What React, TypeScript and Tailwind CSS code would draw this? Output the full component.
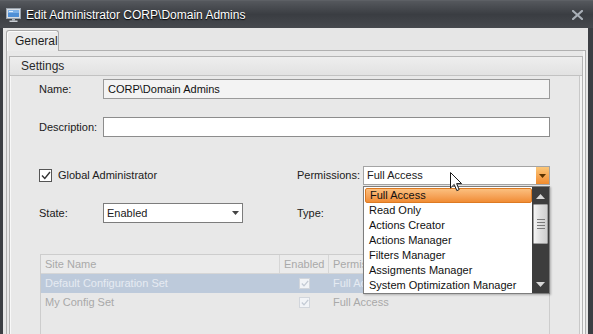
import React from 'react';

const permissionItems = [
  'Full Access',
  'Read Only',
  'Actions Creator',
  'Actions Manager',
  'Filters Manager',
  'Assigments Manager',
  'System Optimization Manager',
];

const MonitorIcon = () => (
  <svg width="15" height="14" viewBox="0 0 15 14">
    <rect x="0.5" y="0.5" width="14" height="10" fill="#d8dde3" stroke="#9aa3ad" />
    <rect x="2" y="2" width="11" height="7" fill="#4f8fd6" />
    <rect x="2" y="2" width="11" height="3" fill="#7fb2e8" />
    <rect x="3" y="3" width="4" height="1" fill="#dfefff" />
    <rect x="6" y="11" width="3" height="1.5" fill="#aab2bb" />
    <rect x="3.5" y="12.5" width="8" height="1.5" fill="#c8cdd3" />
  </svg>
);

const CloseX = () => (
  <svg width="11" height="10" viewBox="0 0 11 10">
    <path d="M1 1 L10 9 M10 1 L1 9" stroke="#a9afb7" strokeWidth="2.2" strokeLinecap="square" />
  </svg>
);

const Arrow = ({ color = '#333' }: { color?: string }) => (
  <svg width="7" height="4" viewBox="0 0 7 4">
    <path d="M0 0 H7 L3.5 4 Z" fill={color} />
  </svg>
);

const Cursor = () => (
  <svg width="13" height="20" viewBox="0 0 13 20">
    <path d="M0.5 0.5 L0.5 16 L4.2 12.4 L6.8 18.6 L9.2 17.6 L6.6 11.6 L11.6 11.6 Z" fill="#ffffff" stroke="#1a1a1a" strokeWidth="1" strokeLinejoin="round" />
  </svg>
);

const Check = ({ color }: { color: string }) => (
  <svg width="10" height="9" viewBox="0 0 10 9">
    <path d="M1 4.5 L3.8 7.5 L9 1" fill="none" stroke={color} strokeWidth="1.4" />
  </svg>
);

const GridCheck = () => (
  <div className="w-[11px] h-[11px] border border-[#d2d6dc] bg-[#f2f4f7] flex items-center justify-center">
    <svg width="8" height="7" viewBox="0 0 8 7">
      <path d="M0.8 3.5 L3 5.8 L7.2 0.8" fill="none" stroke="#c3cad4" strokeWidth="1.3" />
    </svg>
  </div>
);

export default function App() {
  return (
    <div className="relative w-[593px] h-[334px] overflow-hidden flex flex-col bg-[#3b3e43] font-['Liberation_Sans',Arial,sans-serif] text-[11px] text-[#202020]">
      {/* Title bar */}
      <div className="h-[28px] shrink-0 flex items-center bg-gradient-to-b from-[#55585d] via-[#3a3d42] to-[#46494e] border-t border-[#5d6065]">
        <div className="ml-[6px] mt-[1px]"><MonitorIcon /></div>
        <span className="ml-[5px] text-[12px] text-white [text-shadow:0_1px_1px_#000]">Edit Administrator CORP\Domain Admins</span>
        <div className="ml-auto mr-[10px] mt-[1px]"><CloseX /></div>
      </div>

      {/* Body */}
      <div className="flex-1 min-h-0 ml-[3px] mr-[5px] bg-[#e6e6e6] flex flex-col">
        {/* Tab strip */}
        <div className="pt-[2px] pl-[3px] flex">
          <div className="w-[53px] h-[21px] -mb-[1px] relative z-10 rounded-t-[3px] border border-b-0 border-[#a9a9a9] bg-[#ebebeb] shadow-[inset_1px_1px_0_#fafafa] flex items-center pl-[8px] text-[12px] text-[#1e1e1e]">
            General
          </div>
        </div>

        {/* Tab panel */}
        <div className="flex-1 min-h-0 ml-[3px] mr-[2px] border border-b-0 border-[#b0b0b0] bg-[#e8e8e8] pt-[5px] px-[2px] flex flex-col shadow-[inset_-2px_0_0_#f4f4f4]">
          {/* Group box */}
          <div className="flex-1 min-h-0 border border-b-0 border-[#b4b4b4] shadow-[inset_1px_1px_0_#f8f8f8,inset_-2px_0_0_#f4f4f4,inset_-3px_0_0_#c8c8c8] flex flex-col">
            <div className="h-[19px] shrink-0 flex items-center pl-[11px] bg-gradient-to-b from-[#eeeeee] to-[#e2e2e2] border-b border-[#c2c2c2] text-[12px] text-[#2a2a2a]">
              Settings
            </div>

            <div className="pl-[29px] pt-[3px] flex flex-col">
              {/* Name */}
              <div className="flex items-center h-[20px]">
                <span className="w-[64px]">Name:</span>
                <div className="w-[447px] h-[20px] border border-[#9a9a9a] bg-[#f3f3f3] flex items-center pl-[4px] text-[#111]">
                  CORP\Domain Admins
                </div>
              </div>

              {/* Description */}
              <div className="flex items-center h-[20px] mt-[18px]">
                <span className="w-[64px]">Description:</span>
                <div className="w-[447px] h-[20px] border border-[#8c8c8c] bg-white" />
              </div>

              {/* Global admin / Permissions */}
              <div className="flex items-center h-[19px] mt-[29px]">
                <div className="w-[258px] flex items-center">
                  <div className="w-[13px] h-[13px] border border-[#555] bg-white flex items-center justify-center">
                    <Check color="#333" />
                  </div>
                  <span className="ml-[6px]">Global Administrator</span>
                </div>
                <span className="w-[66px]">Permissions:</span>
                <div className="w-[187px] h-[19px] border border-[#a4a4a4] bg-white flex items-center">
                  <span className="pl-[3px] flex-1">Full Access</span>
                  <div className="w-[13px] h-full bg-gradient-to-b from-[#fbc778] to-[#f08b2c] flex items-center justify-center">
                    <Arrow color="#5a3200" />
                  </div>
                </div>
              </div>

              {/* State / Type */}
              <div className="flex items-center h-[20px] mt-[18px]">
                <span className="w-[64px]">State:</span>
                <div className="w-[140px] h-[20px] border border-[#7c7c7c] bg-white flex items-center">
                  <span className="pl-[3px] flex-1">Enabled</span>
                  <div className="w-[14px] flex justify-center"><Arrow color="#444" /></div>
                </div>
                <span className="ml-[54px]">Type:</span>
              </div>

              {/* Grid (disabled) */}
              <div className="mt-[31px] ml-[1px] w-[510px] h-[120px] border border-[#cdcdcd] bg-[#e8e8e8] text-[#a9a9a9] shrink-0">
                <div className="h-[19px] flex bg-[#ebebeb] border-b border-[#d6d6d6]">
                  <div className="w-[239px] pl-[4px] flex items-center border-r border-[#d6d6d6]">Site Name</div>
                  <div className="w-[49px] pl-[4px] flex items-center border-r border-[#d6d6d6]">Enabled</div>
                  <div className="pl-[4px] flex items-center">Permissions</div>
                </div>
                <div className="h-[19px] flex bg-[#bdcadb] text-[#e6ebf2]">
                  <div className="w-[239px] pl-[4px] flex items-center">Default Configuration Set</div>
                  <div className="w-[49px] flex items-center justify-center"><GridCheck /></div>
                  <div className="pl-[4px] flex items-center">Full Access</div>
                </div>
                <div className="h-[19px] flex">
                  <div className="w-[239px] pl-[4px] flex items-center">My Config Set</div>
                  <div className="w-[49px] flex items-center justify-center"><GridCheck /></div>
                  <div className="pl-[4px] flex items-center">Full Access</div>
                </div>
              </div>
            </div>
          </div>
        </div>
      </div>

      {/* Open permissions dropdown */}
      <div className="absolute left-[363px] top-[186px] w-[187px] h-[108px] border border-[#7d7d7d] bg-white flex shadow-[1px_1px_2px_rgba(0,0,0,0.25)]">
        <div className="flex-1 flex flex-col pt-[1px] pl-[1px]">
          {permissionItems.map((item, i) => (
            <div
              key={item}
              className={`h-[15px] shrink-0 flex items-center pl-[4px] text-[11px] text-[#111] ${i === 0 ? 'rounded-[2px] border border-[#dd7a22] bg-gradient-to-b from-[#fbbf7e] to-[#f08c33] pl-[3px]' : ''}`}
            >
              {item}
            </div>
          ))}
        </div>
        <div className="w-[17px] bg-[#3d3d3d] flex flex-col items-center py-[1px]">
          <div className="h-[16px] flex items-center">
            <svg width="9" height="5" viewBox="0 0 9 5"><path d="M0 5 L4.5 0 L9 5 Z" fill="#d8d8d8" /></svg>
          </div>
          <div className="w-[15px] h-[40px] rounded-[1px] bg-gradient-to-r from-[#f4f4f4] via-[#dedede] to-[#cfcfcf] border border-[#9c9c9c] flex flex-col items-center justify-center gap-[2px]">
            <div className="w-[8px] h-px bg-[#7a7a7a]" />
            <div className="w-[8px] h-px bg-[#7a7a7a]" />
            <div className="w-[8px] h-px bg-[#7a7a7a]" />
            <div className="w-[8px] h-px bg-[#7a7a7a]" />
          </div>
          <div className="flex-1" />
          <div className="h-[16px] flex items-center">
            <svg width="9" height="5" viewBox="0 0 9 5"><path d="M0 0 L9 0 L4.5 5 Z" fill="#d8d8d8" /></svg>
          </div>
        </div>
      </div>

      {/* Mouse cursor */}
      <div className="absolute left-[450px] top-[172px]">
        <Cursor />
      </div>
    </div>
  );
}
